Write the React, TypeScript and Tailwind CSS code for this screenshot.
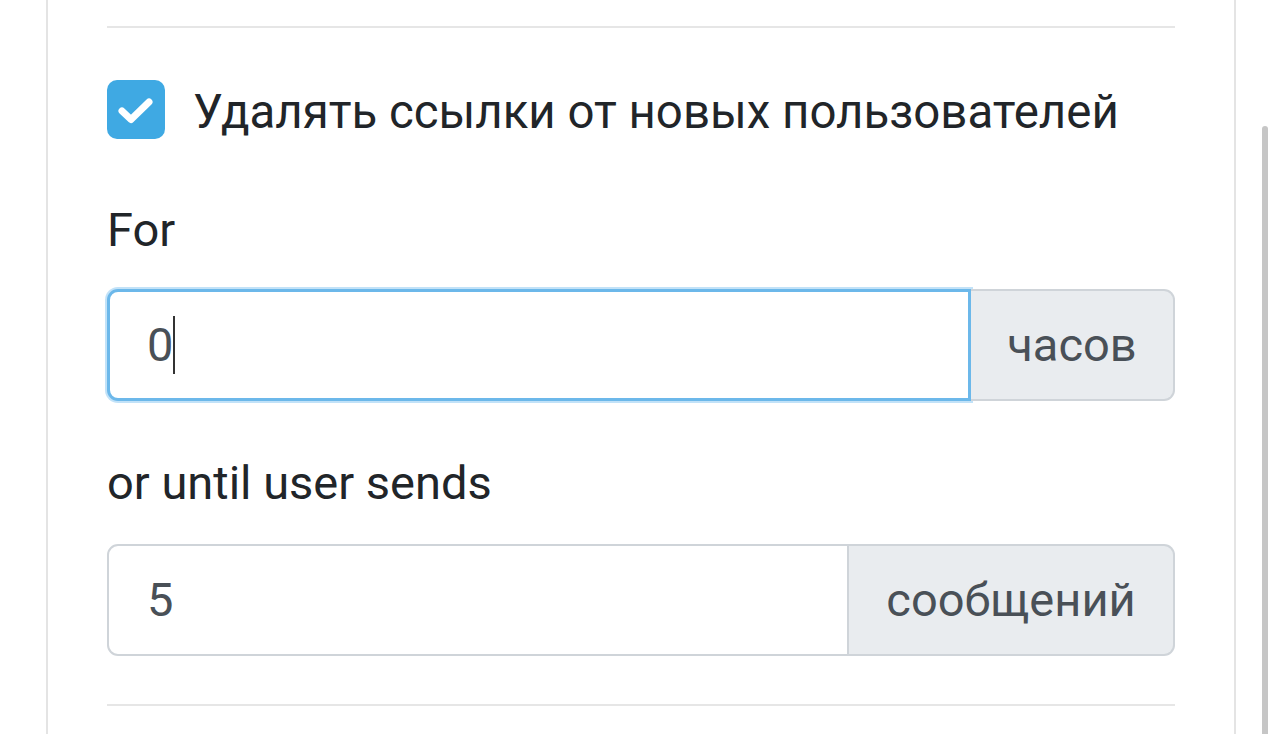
import React from "react";

export default function App() {
  return (
    <div
      className="relative w-[1280px] h-[734px] overflow-hidden bg-white text-[#212529]"
      style={{ fontFamily: "Roboto, 'Noto Sans', sans-serif" }}
    >
      <div className="ml-[46px] w-[1190px] h-full border-l-2 border-r-2 border-[#e4e4e4] bg-white px-[59px]">
        <div className="pt-[26px]">
          <div className="border-t-2 border-[#e6e6e6]" />
        </div>

        <div className="mt-[51px] flex items-center gap-[28px]">
          <div className="w-[58px] h-[59px] rounded-[10px] bg-[#3fa9e3] flex items-center justify-center">
            <svg width="58" height="59" viewBox="0 0 58 59">
              <path
                d="M15 31 L24 39.5 L42 22"
                fill="none"
                stroke="white"
                strokeWidth="7"
                strokeLinecap="round"
                strokeLinejoin="round"
              />
            </svg>
          </div>
          <span className="relative top-[3px] text-[47.4px] leading-[60px] text-[#212529]">
            Удалять ссылки от новых пользователей
          </span>
        </div>

        <div className="mt-[61px] text-[47px] leading-[60px]">For</div>

        <div className="mt-[29px] flex h-[112px]">
          <div className="flex-1 flex items-center rounded-l-[11px] border-[3px] border-[#6cb8ea] shadow-[0_0_0_2px_rgba(120,190,240,0.45)] bg-white pl-[37px] text-[47px] text-[#495057]">
            <span>0</span>
            <span className="w-[2px] h-[58px] bg-[#333]" />
          </div>
          <div className="w-[204px] flex items-center justify-center rounded-r-[11px] border-2 border-l-0 border-[#cfd4d9] bg-[#e9ecef] text-[47px] text-[#495057]">
            часов
          </div>
        </div>

        <div className="mt-[52px] text-[47px] leading-[60px]">or until user sends</div>

        <div className="mt-[31px] flex h-[112px]">
          <div className="flex-1 flex items-center rounded-l-[11px] border-2 border-[#cfd4d9] bg-white pl-[38px] text-[47px] text-[#495057]">
            5
          </div>
          <div className="w-[326px] flex items-center justify-center rounded-r-[11px] border-2 border-l-0 border-[#cfd4d9] bg-[#e9ecef] text-[47px] text-[#495057]">
            сообщений
          </div>
        </div>

        <div className="mt-[48px] border-t-2 border-[#e6e6e6]" />
      </div>

      <div className="absolute left-[1262px] top-[126px] w-[6px] h-[620px] rounded-full bg-[#c6c6c6]" />
    </div>
  );
}
